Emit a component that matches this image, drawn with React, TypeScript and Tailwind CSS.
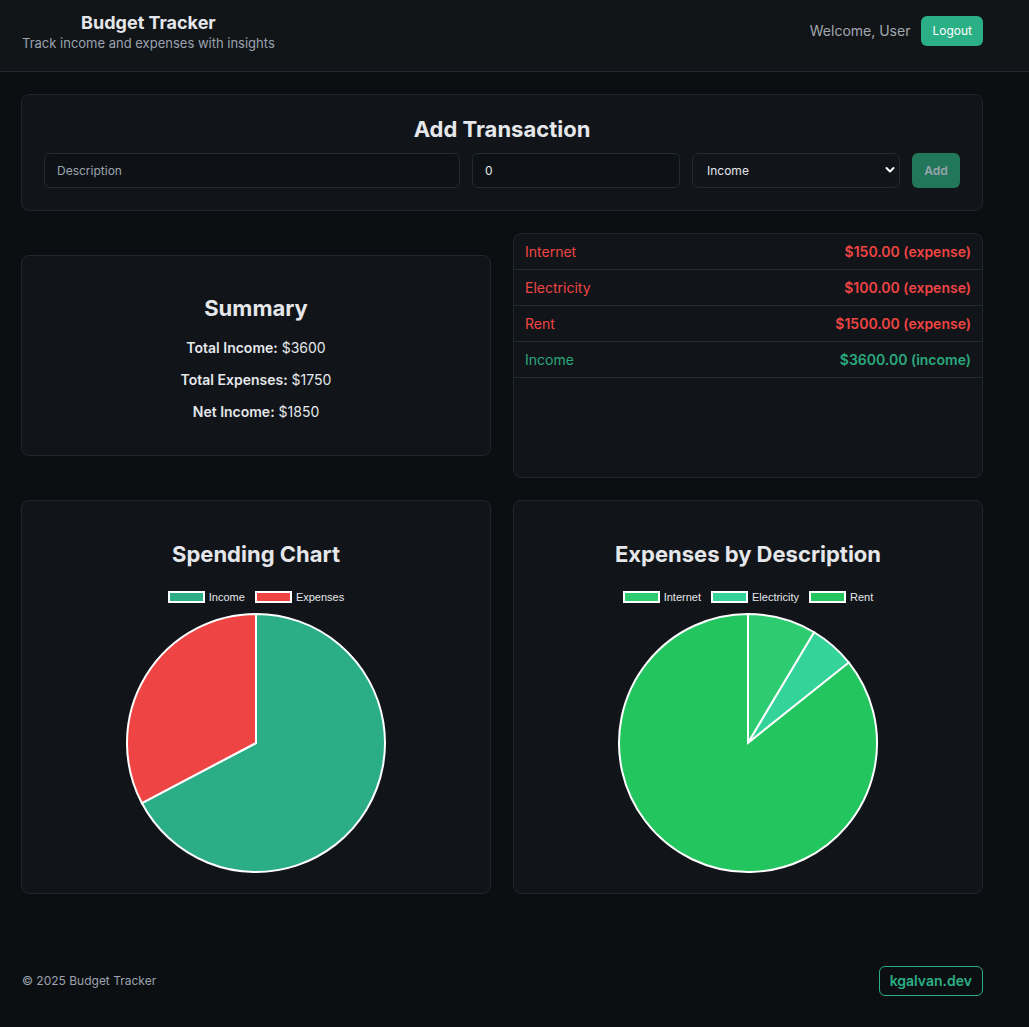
import { useState } from 'react';

type Slice = { label: string; value: number; color: string };

function arcPath(cx: number, cy: number, r: number, a0: number, a1: number) {
  // angles in fractions of a turn, 0 = top, clockwise
  const p = (a: number) => {
    const t = a * Math.PI * 2 - Math.PI / 2;
    return [cx + r * Math.cos(t), cy + r * Math.sin(t)];
  };
  const [x0, y0] = p(a0);
  const [x1, y1] = p(a1);
  const large = a1 - a0 > 0.5 ? 1 : 0;
  return `M${cx} ${cy} L${x0} ${y0} A${r} ${r} 0 ${large} 1 ${x1} ${y1} Z`;
}

function PieCard({ title, data }: { title: string; data: Slice[] }) {
  const total = data.reduce((s, d) => s + d.value, 0);
  let acc = 0;
  const slices = data.map((d) => {
    const a0 = acc / total;
    acc += d.value;
    return { ...d, a0, a1: acc / total };
  });

  return (
    <div className="rounded-lg border border-[#1f2630] bg-[#111519] pt-[37px] pb-[19px] flex flex-col items-center">
      <h2 className="text-[22px] font-bold text-[#e5e7eb] h-8 leading-8">{title}</h2>
      <div className="mt-[21px] flex items-center gap-[10px] font-['Liberation_Sans',sans-serif] text-[11px] text-[#e5e7eb] h-[12px]">
        {data.map((d) => (
          <div key={d.label} className="flex items-center gap-[4px]">
            <span className="w-[37px] h-[12px] border-2 border-white" style={{ background: d.color }} />
            <span>{d.label}</span>
          </div>
        ))}
      </div>
      <svg className="mt-[9px]" width="262" height="262" viewBox="0 0 262 262">
        {slices.map((s) => (
          <path key={s.label} d={arcPath(131, 131, 129, s.a0, s.a1)} fill={s.color} stroke="#ffffff" strokeWidth="2" />
        ))}
      </svg>
    </div>
  );
}

const transactions = [
  { desc: 'Internet', amount: 150, type: 'expense' },
  { desc: 'Electricity', amount: 100, type: 'expense' },
  { desc: 'Rent', amount: 1500, type: 'expense' },
  { desc: 'Income', amount: 3600, type: 'income' },
];

export default function App() {
  const [desc, setDesc] = useState('');
  const [amount, setAmount] = useState('0');
  const [type, setType] = useState('income');

  return (
    <div className="min-h-screen bg-[#0b0f12] font-['Inter',sans-serif] text-[#e5e7eb]">
      <header className="h-[72px] bg-[#111518] border-b border-[#232a33]">
        <div className="w-[962px] ml-[21px] h-full flex items-start justify-between">
          <div className="flex flex-col items-center pl-px pt-[11px]">
            <h1 className="text-lg font-bold leading-6 text-[#e5e7eb]">Budget Tracker</h1>
            <p className="text-[13px] leading-4 text-[#9ca3af]">Track income and expenses with insights</p>
          </div>
          <div className="flex items-center gap-[11px] pt-4">
            <span className="text-sm text-[#a3a8b0]">Welcome, User</span>
            <button className="h-[30px] px-[11px] rounded-md bg-[#2bb086] text-xs text-white">Logout</button>
          </div>
        </div>
      </header>

      <main className="w-[962px] ml-[21px] pt-[22px] flex flex-col gap-[22px]">
        <section className="rounded-lg border border-[#1f2630] bg-[#111519] pt-[19px] pb-[22px] px-[22px]">
          <h2 className="text-[22px] font-bold text-center leading-[30px] mb-[9px]">Add Transaction</h2>
          <div className="grid grid-cols-[2fr_1fr_1fr_48px] gap-3 items-center">
            <input
              value={desc}
              onChange={(e) => setDesc(e.target.value)}
              placeholder="Description"
              className="min-w-0 h-[35px] px-3 rounded-md border border-[#222a35] bg-[#0e1216] text-xs text-[#e5e7eb] placeholder-[#9ca3af] outline-none"
            />
            <input
              value={amount}
              onChange={(e) => setAmount(e.target.value)}
              className="min-w-0 h-[35px] px-3 rounded-md border border-[#222a35] bg-[#0e1216] text-xs text-[#e5e7eb] outline-none"
            />
            <div className="relative min-w-0">
              <select
                value={type}
                onChange={(e) => setType(e.target.value)}
                className="w-full h-[35px] appearance-none pl-[14px] rounded-md border border-[#222a35] bg-[#111519] text-xs text-[#e5e7eb] outline-none"
              >
                <option value="income">Income</option>
                <option value="expense">Expense</option>
              </select>
              <svg className="absolute right-[5px] top-[13px] w-[10px] h-[8px] pointer-events-none" viewBox="0 0 10 8" fill="none">
                <path d="M1.5 2l3.5 3.5L8.5 2" stroke="#ffffff" strokeWidth="2" strokeLinecap="round" strokeLinejoin="round" />
              </svg>
            </div>
            <button className="w-12 h-[35px] rounded-md bg-[#22775a] text-xs font-semibold text-[#9ca3af]">Add</button>
          </div>
        </section>

        <section className="grid grid-cols-2 gap-[22px] items-center">
          <div className="rounded-lg border border-[#1f2630] bg-[#111519] pt-[36px] pb-[33px] text-center">
            <h2 className="text-[22px] font-bold leading-8 mb-[14px]">Summary</h2>
            <div className="flex flex-col gap-3 text-sm leading-5">
              <p><span className="font-semibold">Total Income:</span> $3600</p>
              <p><span className="font-semibold">Total Expenses:</span> $1750</p>
              <p><span className="font-semibold">Net Income:</span> $1850</p>
            </div>
          </div>
          <div className="h-[245px] rounded-lg border border-[#1f2630] bg-[#111519] overflow-hidden">
            {transactions.map((t) => {
              const color = t.type === 'income' ? 'text-[#2aa87d]' : 'text-[#ef4444]';
              return (
                <div key={t.desc} className={`h-9 flex items-center justify-between px-[11px] border-b border-[#222a35] text-sm ${color}`}>
                  <span>{t.desc}</span>
                  <span className="font-semibold">
                    ${t.amount.toFixed(2)} ({t.type})
                  </span>
                </div>
              );
            })}
          </div>
        </section>

        <section className="grid grid-cols-2 gap-[22px]">
          <PieCard
            title="Spending Chart"
            data={[
              { label: 'Income', value: 3600, color: '#2bae85' },
              { label: 'Expenses', value: 1750, color: '#ef4444' },
            ]}
          />
          <PieCard
            title="Expenses by Description"
            data={[
              { label: 'Internet', value: 150, color: '#2ecc71' },
              { label: 'Electricity', value: 100, color: '#34d399' },
              { label: 'Rent', value: 1500, color: '#22c55e' },
            ]}
          />
        </section>
      </main>

      <footer className="w-[962px] ml-[21px] mt-[72px] pb-[31px] flex items-center justify-between">
        <span className="text-xs text-[#9ca3af] pl-px">© 2025 Budget Tracker</span>
        <a className="h-[30px] px-[10px] flex items-center rounded-md border border-[#2bae85] text-sm font-semibold text-[#2bae85]">
          kgalvan.dev
        </a>
      </footer>
    </div>
  );
}
